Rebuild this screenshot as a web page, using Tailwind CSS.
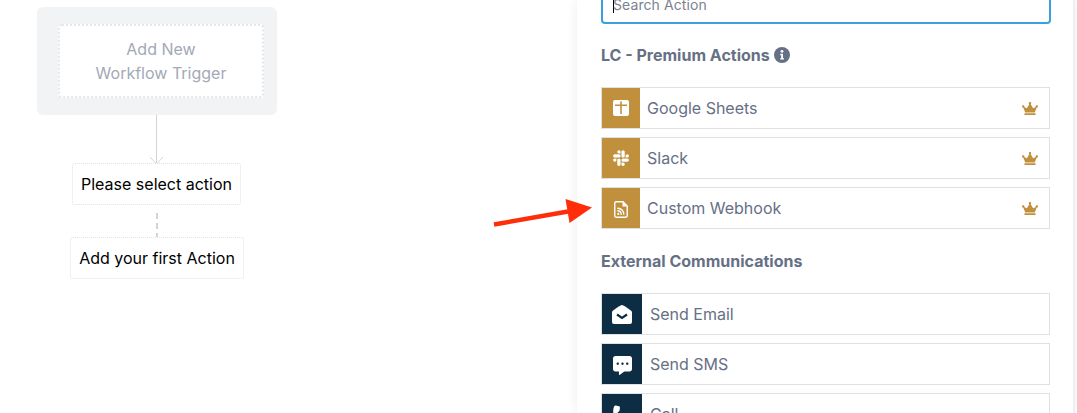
<!DOCTYPE html>
<html>
<head>
<meta charset="utf-8">
<script src="https://cdn.jsdelivr.net/npm/@tailwindcss/browser@4"></script>
</head>
<body class="bg-white">
<div class="relative flex h-[413px] w-[1077px] overflow-hidden bg-white font-['Inter',sans-serif]">
  <div class="w-[577px] shrink-0 pt-[7px]">
    <div class="ml-[37px] flex h-[108px] w-[240px] rounded-[6px] bg-[#f2f3f5] pl-[21px] pt-[17px]">
      <div class="flex h-[74px] w-[206px] flex-col items-center rounded-[4px] border-2 border-dotted border-[#e5e7eb] bg-white pt-[11px] text-center text-[16px] leading-[24px] text-[#a3a9b6]">
        <span>Add New</span><span>Workflow Trigger</span>
      </div>
    </div>
    <div class="ml-[70px] flex w-[174px] flex-col">
      <svg class="-mb-[2px] ml-[76px] h-[50px] w-[20px]" viewBox="0 0 20 50" fill="none" stroke="#d1d5db" stroke-width="1"><path d="M10.500 0V49M4 42l6.500 7 6.500-7"/></svg>
      <div class="ml-[2px] flex h-[42px] w-[169px] justify-center rounded-[3px] border border-dotted border-[#dfe1e6] bg-white pt-[8px] text-[16px] leading-[24px] text-black">Please select action</div>
      <svg class="ml-[85px] h-[32px] w-[4px]" viewBox="0 0 4 32" fill="none" stroke="#d1d5db" stroke-width="2"><path d="M2 8V14M2 18V24M2 28V32"/></svg>
      <div class="flex h-[42px] w-[174px] justify-center rounded-[3px] border border-dotted border-[#dfe1e6] bg-white pt-[8px] text-[16px] leading-[24px] text-black">Add your first Action</div>
    </div>
  </div>

  <div class="h-[413px] w-[498px] shrink-0 border-r-2 border-[#efeff1] bg-white pl-[24px] shadow-[0_0_12px_rgba(0,0,0,0.07)]">
    <div class="-mt-[16px] flex h-[40px] w-[450px] items-center rounded-[4px] border-2 border-[#38a1de] bg-white pl-[10px] text-[14px] text-[#7a8291]">
      <span class="h-[18px] w-px bg-black"></span><span class="-ml-px tracking-[0.08px]">Search Action</span>
    </div>

    <div class="mt-[21px] flex h-[20px] items-center gap-[4px] text-[16px] font-bold text-[#667085]">
      <span>LC - Premium Actions</span>
      <svg class="h-[16px] w-[16px]" viewBox="0 0 16 16"><circle cx="8" cy="8" r="8" fill="#667085"/><circle cx="8" cy="4.300" r="1.400" fill="#fff"/><path d="M6.200 6.800H9V11.200H10V12.600H6.200V11.200H7.200V8.200H6.200Z" fill="#fff"/></svg>
    </div>

    <div class="mt-[22px] flex w-[449px] flex-col gap-[8px]">
      <div class="flex h-[42px] items-center border border-[#dfe1e5] bg-white">
        <div class="flex h-[40px] w-[38px] shrink-0 items-center justify-center bg-[#c1903c]">
          <svg class="h-[16px] w-[16px]" viewBox="0 0 16 16"><rect width="16" height="16" rx="2" fill="#fff"/><path d="M2 4.500H7.200V1.500H8.800V4.500H14V6.100H8.800V14H7.200V6.100H2Z" fill="#c1903c"/></svg>
        </div>
        <span class="ml-[7px] flex-1 text-[16px] text-[#667085]">Google Sheets</span>
        <svg class="mr-[11px] h-[13px] w-[16px]" viewBox="0 0 640 512" fill="#c1903c"><path d="M528 448H112c-8.800 0-16 7.200-16 16v32c0 8.800 7.200 16 16 16h416c8.800 0 16-7.200 16-16v-32c0-8.800-7.200-16-16-16zm64-320c-26.500 0-48 21.500-48 48 0 7.100 1.600 13.700 4.400 19.800L476 239.200c-15.400 9.200-35.300 4-44.200-11.600L350.300 85C361 76.200 368 63 368 48c0-26.500-21.500-48-48-48s-48 21.500-48 48c0 15 7 28.200 17.700 37l-81.500 142.600c-8.900 15.600-28.900 20.800-44.200 11.600l-72.300-43.400c2.700-6 4.400-12.700 4.400-19.800 0-26.500-21.500-48-48-48S0 149.500 0 176s21.500 48 48 48c2.600 0 5.200-.4 7.700-.8L128 416h384l72.300-192.800c2.500.4 5.100.8 7.700.8 26.500 0 48-21.500 48-48s-21.500-48-48-48z"/></svg>
      </div>
      <div class="flex h-[42px] items-center border border-[#dfe1e5] bg-white">
        <div class="flex h-[40px] w-[38px] shrink-0 items-center justify-center bg-[#c1903c]">
          <svg class="h-[18px] w-[16px]" viewBox="0 0 448 512" fill="#fff"><path d="M94.120 315.100c0 25.900-21.160 47.060-47.060 47.060S0 341 0 315.100c0-25.900 21.160-47.060 47.060-47.060h47.060v47.060zm23.720 0c0-25.900 21.160-47.060 47.060-47.060s47.060 21.160 47.060 47.060v117.840c0 25.900-21.160 47.060-47.060 47.060s-47.060-21.160-47.060-47.060V315.100zm47.060-188.980c-25.900 0-47.060-21.160-47.060-47.060S139 32 164.900 32s47.060 21.160 47.060 47.060v47.060H164.900zm0 23.720c25.900 0 47.060 21.160 47.060 47.060s-21.160 47.060-47.060 47.060H47.060C21.160 243.960 0 222.800 0 196.900s21.160-47.060 47.060-47.060H164.900zm188.980 47.060c0-25.900 21.160-47.060 47.060-47.060 25.900 0 47.060 21.160 47.060 47.060s-21.160 47.060-47.060 47.060h-47.060V196.900zm-23.720 0c0 25.900-21.160 47.060-47.060 47.060-25.900 0-47.060-21.160-47.060-47.060V79.060c0-25.900 21.160-47.060 47.060-47.060 25.900 0 47.060 21.160 47.060 47.060V196.900zM283.100 385.880c25.900 0 47.060 21.160 47.060 47.060 0 25.900-21.160 47.060-47.060 47.060-25.900 0-47.060-21.160-47.060-47.060v-47.060h47.060zm0-23.720c-25.900 0-47.060-21.160-47.060-47.060 0-25.900 21.160-47.060 47.060-47.060h117.840c25.900 0 47.060 21.160 47.060 47.060 0 25.900-21.160 47.060-47.060 47.060H283.100z"/></svg>
        </div>
        <span class="ml-[7px] flex-1 text-[16px] text-[#667085]">Slack</span>
        <svg class="mr-[11px] h-[13px] w-[16px]" viewBox="0 0 640 512" fill="#c1903c"><path d="M528 448H112c-8.800 0-16 7.200-16 16v32c0 8.800 7.200 16 16 16h416c8.800 0 16-7.200 16-16v-32c0-8.800-7.200-16-16-16zm64-320c-26.500 0-48 21.500-48 48 0 7.100 1.600 13.700 4.400 19.800L476 239.200c-15.400 9.200-35.300 4-44.200-11.600L350.300 85C361 76.200 368 63 368 48c0-26.500-21.500-48-48-48s-48 21.500-48 48c0 15 7 28.200 17.700 37l-81.500 142.600c-8.900 15.600-28.900 20.800-44.200 11.600l-72.300-43.400c2.700-6 4.400-12.700 4.400-19.800 0-26.500-21.500-48-48-48S0 149.500 0 176s21.500 48 48 48c2.600 0 5.200-.4 7.700-.8L128 416h384l72.300-192.800c2.500.4 5.100.8 7.700.8 26.500 0 48-21.500 48-48s-21.500-48-48-48z"/></svg>
      </div>
      <div class="flex h-[42px] items-center border border-[#dfe1e5] bg-white">
        <div class="flex h-[40px] w-[38px] shrink-0 items-center justify-center bg-[#c1903c]">
          <svg class="mt-[3px] h-[17px] w-[14px]" viewBox="0 0 14 17" fill="none"><path d="M.750 2.200A1.500 1.500 0 0 1 2.250.750H9L13.250 5V14.800A1.500 1.500 0 0 1 11.750 16.250H2.250A1.500 1.500 0 0 1 .750 14.800Z" stroke="#fff" stroke-width="1.400"/><path d="M8.500 .750V5.500H13.250Z" fill="#fff"/><circle cx="4.300" cy="12.900" r="1.100" fill="#fff"/><path d="M3.300 9.800A3.400 3.400 0 0 1 7.200 13.800M3.300 7.300A6 6 0 0 1 9.800 13.800" stroke="#fff" stroke-width="1.300"/></svg>
        </div>
        <span class="ml-[7px] flex-1 text-[16px] text-[#667085]">Custom Webhook</span>
        <svg class="mr-[11px] h-[13px] w-[16px]" viewBox="0 0 640 512" fill="#c1903c"><path d="M528 448H112c-8.800 0-16 7.200-16 16v32c0 8.800 7.200 16 16 16h416c8.800 0 16-7.200 16-16v-32c0-8.800-7.200-16-16-16zm64-320c-26.500 0-48 21.500-48 48 0 7.100 1.600 13.700 4.400 19.800L476 239.200c-15.400 9.200-35.300 4-44.200-11.600L350.300 85C361 76.200 368 63 368 48c0-26.500-21.500-48-48-48s-48 21.500-48 48c0 15 7 28.200 17.700 37l-81.500 142.600c-8.900 15.600-28.900 20.800-44.200 11.600l-72.300-43.400c2.700-6 4.400-12.700 4.400-19.800 0-26.500-21.500-48-48-48S0 149.500 0 176s21.500 48 48 48c2.600 0 5.200-.4 7.700-.8L128 416h384l72.300-192.800c2.500.4 5.100.8 7.700.8 26.500 0 48-21.500 48-48s-21.500-48-48-48z"/></svg>
      </div>
    </div>

    <div class="mt-[22px] flex h-[20px] items-center text-[16px] font-bold text-[#667085]">External Communications</div>

    <div class="mt-[22px] flex w-[449px] flex-col gap-[8px]">
      <div class="flex h-[42px] items-center border border-[#dfe1e5] bg-white">
        <div class="flex h-[40px] w-[40px] shrink-0 items-center justify-center bg-[#0c2d44]">
          <svg class="h-[19px] w-[20px]" viewBox="0 0 20 19"><path d="M0 7.500C0 6.800.3 6.200.8 5.800 2 4.900 8.500 0 10 0 11.500 0 18 4.900 19.200 5.800 19.700 6.200 20 6.800 20 7.500V17A2 2 0 0 1 18 19H2A2 2 0 0 1 0 17Z" fill="#fff"/><path d="M5 9.500 10 13 15 9.500" fill="none" stroke="#0c2d44" stroke-width="2.200"/></svg>
        </div>
        <span class="ml-[8px] flex-1 text-[16px] text-[#667085]">Send Email</span>
      </div>
      <div class="flex h-[42px] items-center border border-[#dfe1e5] bg-white">
        <div class="flex h-[40px] w-[40px] shrink-0 items-center justify-center bg-[#0c2d44]">
          <svg class="mt-[2px] h-[19px] w-[19px]" viewBox="0 0 512 512" fill="#fff"><path d="M448 0H64C28.700 0 0 28.700 0 64v288c0 35.300 28.700 64 64 64h96v84c0 9.800 11.200 15.500 19.100 9.700L304 416h144c35.300 0 64-28.700 64-64V64c0-35.300-28.700-64-64-64zM128 240c-17.700 0-32-14.300-32-32s14.300-32 32-32 32 14.300 32 32-14.300 32-32 32zm128 0c-17.700 0-32-14.300-32-32s14.300-32 32-32 32 14.300 32 32-14.300 32-32 32zm128 0c-17.700 0-32-14.300-32-32s14.300-32 32-32 32 14.300 32 32-14.300 32-32 32z"/></svg>
        </div>
        <span class="ml-[8px] flex-1 text-[16px] text-[#667085]">Send SMS</span>
      </div>
      <div class="flex h-[42px] items-center border border-[#dfe1e5] bg-white">
        <div class="flex h-[40px] w-[40px] shrink-0 items-center justify-center bg-[#0c2d44]">
          <svg class="-ml-[2px] h-[19px] w-[19px]" viewBox="0 0 512 512" fill="#fff"><path d="M97 12 190 34C203 37 212 48 212 61 212 130 200 160 200 160L150 205C185 280 232 327 307 362L352 312C352 312 382 300 451 300 464 300 475 309 478 322L500 415C503 430 495 445 480 452 440 470 400 480 360 480 160 480 32 352 32 152 32 112 42 72 60 32 67 17 82 9 97 12Z"/></svg>
        </div>
        <span class="ml-[8px] flex-1 text-[16px] text-[#667085]">Call</span>
      </div>
    </div>
  </div>

  <svg class="absolute left-[490px] top-[195px] h-[34px] w-[106px]" viewBox="490 195 106 34"><path d="M494 224.500 568 211.500" stroke="#ff2d0a" stroke-width="4.500" fill="none"/><path d="M565.500 199 592 207.500 569.500 223Z" fill="#ff2d0a"/></svg>
</div>
</body>
</html>
